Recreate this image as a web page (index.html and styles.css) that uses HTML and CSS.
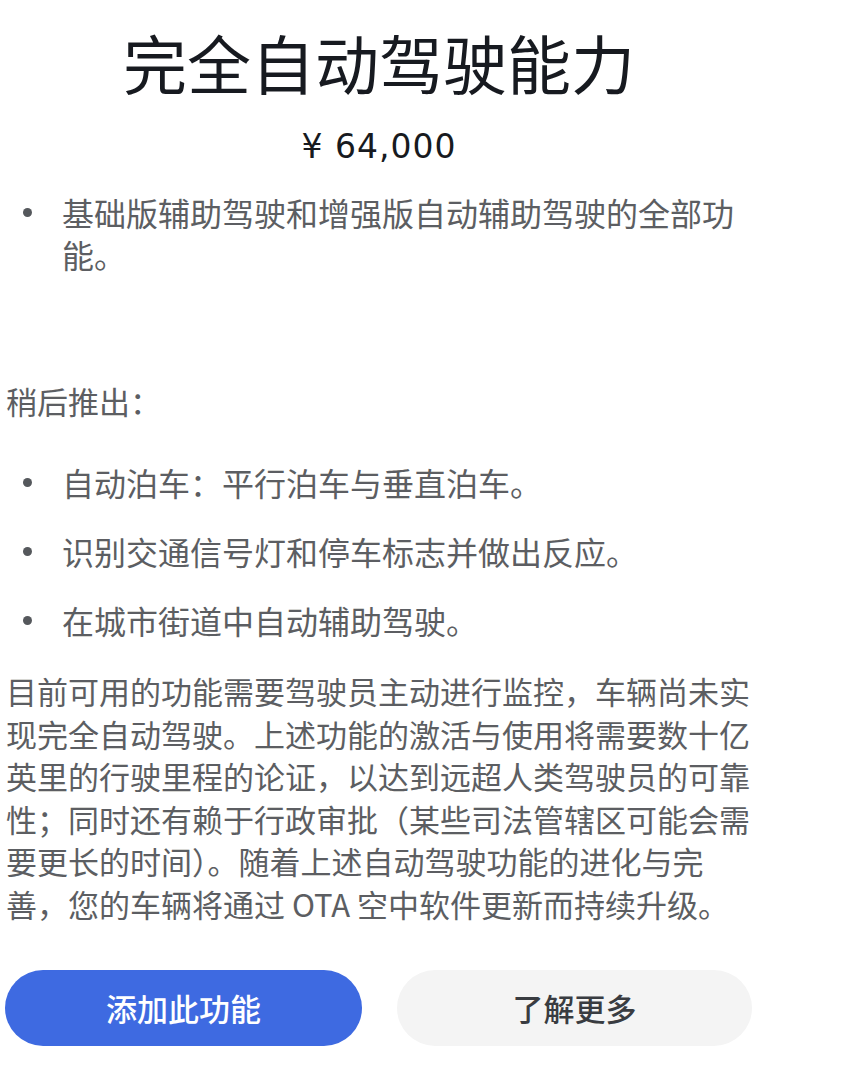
FILE: index.html
```html
<!DOCTYPE html>
<html lang="zh-CN">
<head>
<meta charset="utf-8">
<title>完全自动驾驶能力</title>
<link rel="stylesheet" href="styles.css">
</head>
<body>
<div class="page">
  <h1 class="title">完全自动驾驶能力</h1>
  <p class="price">¥ 64,000</p>
  <ul class="list list-included">
    <li class="item"><span class="dot"></span><span class="item-text">基础版辅助驾驶和增强版自动辅助驾驶的全部功能。</span></li>
  </ul>
  <p class="later">稍后推出：</p>
  <ul class="list list-later">
    <li class="item"><span class="dot"></span><span class="item-text">自动泊车：平行泊车与垂直泊车。</span></li>
    <li class="item"><span class="dot"></span><span class="item-text">识别交通信号灯和停车标志并做出反应。</span></li>
    <li class="item"><span class="dot"></span><span class="item-text">在城市街道中自动辅助驾驶。</span></li>
  </ul>
  <p class="disclaimer">目前可用的功能需要驾驶员主动进行监控，车辆尚未实现完全自动驾驶。上述功能的激活与使用将需要数十亿英里的行驶里程的论证，以达到远超人类驾驶员的可靠性；同时还有赖于行政审批（某些司法管辖区可能会需要更长的时间）。随着上述自动驾驶功能的进化与完善，您的车辆将通过 OTA 空中软件更新而持续升级。</p>
  <div class="actions">
    <button class="btn btn-primary" type="button">添加此功能</button>
    <button class="btn btn-secondary" type="button">了解更多</button>
  </div>
</div>
</body>
</html>
```

FILE: styles.css
```css
html, body {
  margin: 0;
  padding: 0;
  background: #ffffff;
}

body {
  font-family: "Noto Sans CJK SC", "Noto Sans", sans-serif;
  color: #5c5e62;
}

.page {
  width: 746px;
  margin-left: 6px;
  padding-top: 21px;
  display: flex;
  flex-direction: column;
}

.title {
  margin: 0;
  text-align: center;
  font-size: 64px;
  line-height: 80px;
  font-weight: 400;
  color: #171a20;
}

.price {
  margin: 26px 0 0;
  text-align: center;
  font-family: "DejaVu Sans", "Noto Sans CJK SC", sans-serif;
  font-size: 33px;
  line-height: 40px;
  letter-spacing: 1px;
  color: #171a20;
}

.list {
  list-style: none;
  margin: 0;
  padding: 0;
  display: flex;
  flex-direction: column;
}

.list-included {
  margin-top: 24px;
}

.list-later {
  margin-top: 39px;
  gap: 27px;
}

.item {
  display: flex;
  align-items: flex-start;
  font-size: 32px;
  line-height: 42px;
}

.dot {
  flex: none;
  width: 9px;
  height: 9px;
  border-radius: 50%;
  background: #55585c;
  margin: 17px 0 0 17px;
}

.item-text {
  margin-left: 30px;
  flex: 1;
}

.later {
  margin: 105px 0 0;
  font-size: 31px;
  line-height: 42px;
}

.disclaimer {
  margin: 29px 0 0;
  font-size: 31px;
  line-height: 42.6px;
}

.actions {
  margin-top: 44px;
  display: flex;
  gap: 35px;
  margin-left: -1px;
}

.btn {
  flex: none;
  width: 357px;
  height: 76px;
  border: none;
  border-radius: 38px;
  font-family: "Noto Sans CJK SC", "Noto Sans", sans-serif;
  font-size: 31px;
  font-weight: 500;
  padding: 0;
  cursor: pointer;
}

.btn-primary {
  background: #3e6ae1;
  color: #ffffff;
}

.btn-secondary {
  width: 355px;
  background: #f4f4f4;
  color: #393c41;
}
```
